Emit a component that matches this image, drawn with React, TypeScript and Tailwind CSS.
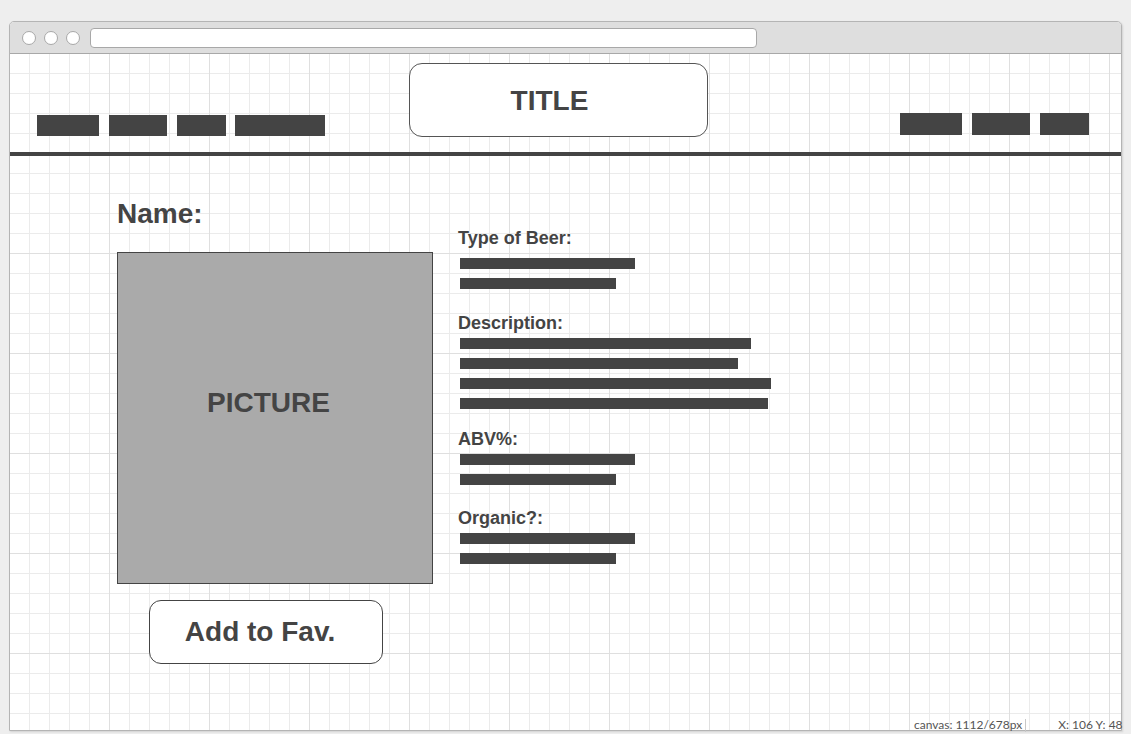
import React from "react"

const font = { fontFamily: "'Liberation Sans', Arial, sans-serif" }

function Bar({ w }: { w: string }) {
  return <div className={`ml-[2px] h-[11px] bg-[#444] ${w}`} />
}

function Field({ label, bars, top, gap }: { label: string; bars: string[]; top: string; gap: string }) {
  return (
    <div className={top}>
      <div className="text-[18px] leading-[20px] font-bold text-[#444]">{label}</div>
      <div className={`flex flex-col gap-[9px] ${gap}`}>
        {bars.map((b, i) => (
          <Bar key={i} w={b} />
        ))}
      </div>
    </div>
  )
}

export default function App() {
  return (
    <div className="relative w-[1131px] h-[734px] bg-[#eeeeee] pt-[21px] pl-[9px] overflow-hidden" style={font}>
      {/* browser window */}
      <div className="w-[1113px] h-[710px] flex flex-col border border-[#b4b4b4] rounded-t-[5px] overflow-hidden bg-white shadow-[1px_1px_2px_rgba(0,0,0,0.12)]">
        <div className="h-[32px] shrink-0 bg-[#dedede] border-b border-[#a8a8a8] flex items-center pl-[12px]">
          <div className="w-[14px] h-[14px] rounded-full bg-white border border-[#a8a8a8]" />
          <div className="ml-[8px] w-[14px] h-[14px] rounded-full bg-white border border-[#a8a8a8]" />
          <div className="ml-[8px] w-[14px] h-[14px] rounded-full bg-white border border-[#a8a8a8]" />
          <div className="ml-[10px] w-[667px] h-[20px] rounded-[4px] bg-white border border-[#a8a8a8]" />
        </div>

        {/* canvas */}
        <div className="flex-1 flex flex-col bg-white bg-[linear-gradient(to_right,#dfdfdf_1px,transparent_1px),linear-gradient(to_bottom,#dfdfdf_1px,transparent_1px),linear-gradient(to_right,#ebebeb_1px,transparent_1px),linear-gradient(to_bottom,#ebebeb_1px,transparent_1px)] bg-[size:100px_100px,100px_100px,20px_20px,20px_20px] bg-[position:99px_99px,99px_99px,19px_19px,19px_19px]">
          {/* header */}
          <div className="h-[98px] flex items-start">
            <div className="ml-[27px] mt-[61px] flex">
              <div className="w-[62px] h-[21px] bg-[#444]" />
              <div className="ml-[10px] w-[58px] h-[21px] bg-[#444]" />
              <div className="ml-[10px] w-[49px] h-[21px] bg-[#444]" />
              <div className="ml-[9px] w-[90px] h-[21px] bg-[#444]" />
            </div>
            <div className="ml-[84px] mt-[9px] w-[299px] h-[74px] bg-white border border-[#555] rounded-[13px] flex items-center justify-center pr-[18px] pt-[2px]">
              <span className="text-[28px] leading-[32px] font-bold text-[#444]">TITLE</span>
            </div>
            <div className="ml-auto mr-[32px] mt-[59px] flex">
              <div className="w-[62px] h-[22px] bg-[#444]" />
              <div className="ml-[10px] w-[58px] h-[22px] bg-[#444]" />
              <div className="ml-[10px] w-[49px] h-[22px] bg-[#444]" />
            </div>
          </div>
          <div className="h-[4px] bg-[#444]" />

          {/* body */}
          <div className="flex items-start">
            <div className="ml-[107px] w-[316px] flex flex-col">
              <div className="mt-[42px] text-[28px] leading-[32px] font-bold text-[#444]">Name:</div>
              <div className="mt-[22px] h-[332px] border border-[#444] bg-[#aaaaaa] flex flex-col items-center pt-[134px] pr-[13px]">
                <span className="text-[28px] leading-[32px] font-bold text-[#444]">PICTURE</span>
              </div>
              <div className="mt-[16px] ml-[32px] w-[234px] h-[64px] bg-white border border-[#444] rounded-[12px] flex items-center justify-center pr-[12px]">
                <span className="text-[28px] leading-[32px] font-bold text-[#444]">Add to Fav.</span>
              </div>
            </div>

            <div className="ml-[25px] mt-[72px] flex flex-col">
              <Field label="Type of Beer:" top="" gap="mt-[10px]" bars={["w-[175px]", "w-[156px]"]} />
              <Field
                label="Description:"
                top="mt-[24px]"
                gap="mt-[5px]"
                bars={["w-[291px]", "w-[278px]", "w-[311px]", "w-[308px]"]}
              />
              <Field label="ABV%:" top="mt-[20px]" gap="mt-[5px]" bars={["w-[175px]", "w-[156px]"]} />
              <Field label="Organic?:" top="mt-[23px]" gap="mt-[5px]" bars={["w-[175px]", "w-[156px]"]} />
            </div>
          </div>
        </div>
      </div>

      {/* status overlay */}
      <div
        className="absolute left-[914px] top-[718px] flex items-center text-[12px] leading-[14px] text-[#555]"
        style={{ fontFamily: "Lato, 'Open Sans', sans-serif" }}
      >
        <span>canvas: 1112/678px</span>
        <span className="ml-[3px] w-px h-[13px] bg-[#c8c8c8]" />
        <span className="ml-[32px]">X: 106 Y: 48</span>
      </div>
    </div>
  )
}
